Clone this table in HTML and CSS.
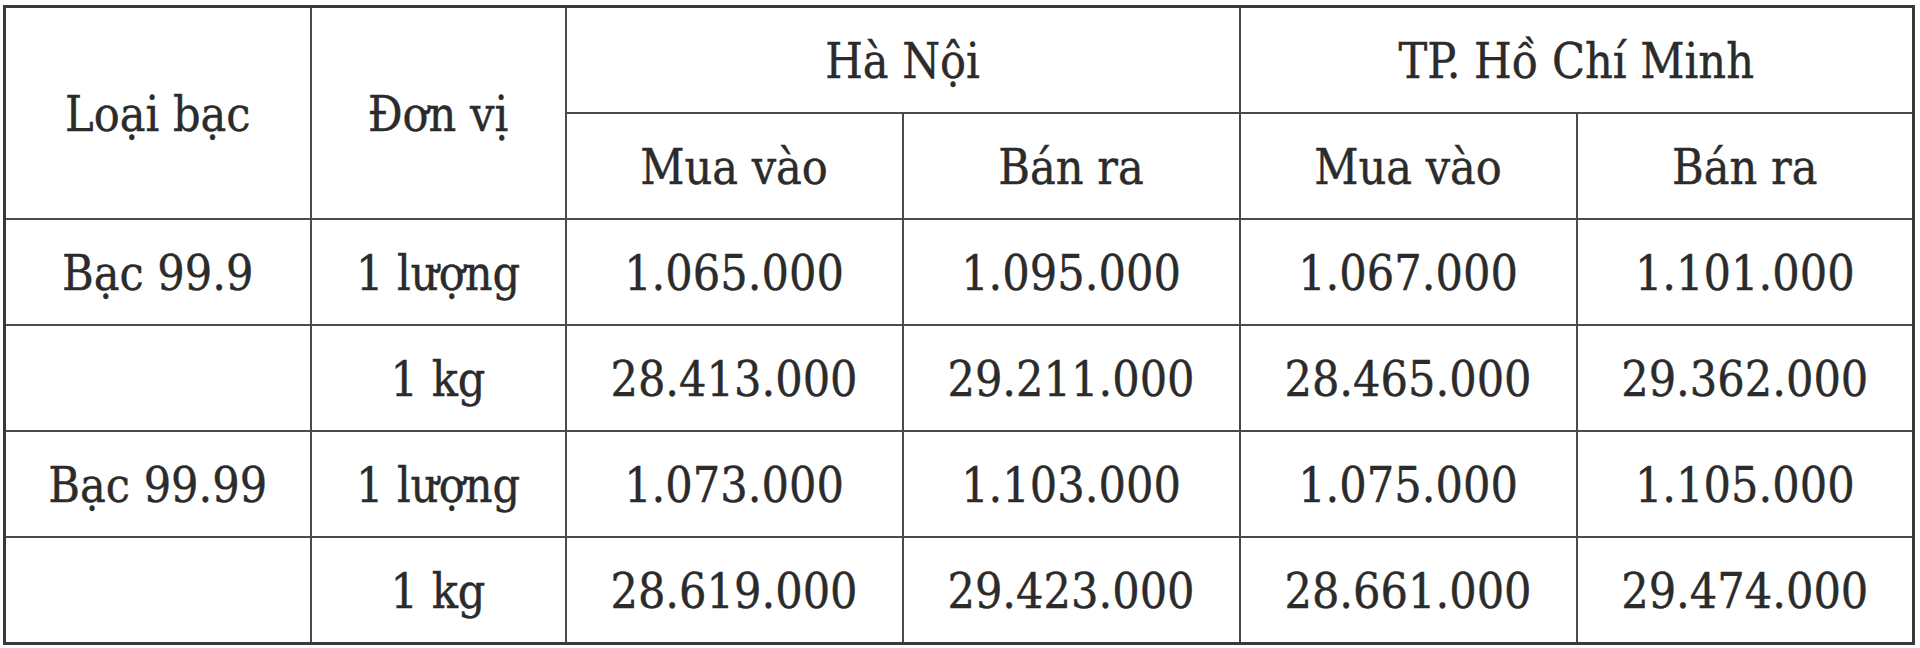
FILE: index.html
```html
<!DOCTYPE html>
<html lang="vi">
<head>
<meta charset="utf-8">
<title>Giá bạc</title>
<link rel="stylesheet" href="styles.css">
</head>
<body>
<table class="price-table">
  <colgroup>
    <col class="c-type">
    <col class="c-unit">
    <col class="c-val">
    <col class="c-val">
    <col class="c-val">
    <col class="c-val">
  </colgroup>
  <thead>
    <tr>
      <th rowspan="2">Loại bạc</th>
      <th rowspan="2">Đơn vị</th>
      <th colspan="2">Hà Nội</th>
      <th colspan="2">TP. Hồ Chí Minh</th>
    </tr>
    <tr>
      <th>Mua vào</th>
      <th>Bán ra</th>
      <th>Mua vào</th>
      <th>Bán ra</th>
    </tr>
  </thead>
  <tbody>
    <tr>
      <td>Bạc 99.9</td>
      <td>1 lượng</td>
      <td>1.065.000</td>
      <td>1.095.000</td>
      <td>1.067.000</td>
      <td>1.101.000</td>
    </tr>
    <tr>
      <td></td>
      <td>1 kg</td>
      <td>28.413.000</td>
      <td>29.211.000</td>
      <td>28.465.000</td>
      <td>29.362.000</td>
    </tr>
    <tr>
      <td>Bạc 99.99</td>
      <td>1 lượng</td>
      <td>1.073.000</td>
      <td>1.103.000</td>
      <td>1.075.000</td>
      <td>1.105.000</td>
    </tr>
    <tr>
      <td></td>
      <td>1 kg</td>
      <td>28.619.000</td>
      <td>29.423.000</td>
      <td>28.661.000</td>
      <td>29.474.000</td>
    </tr>
  </tbody>
</table>
</body>
</html>
```

FILE: styles.css
```css
html, body {
  margin: 0;
  padding: 0;
  background: #ffffff;
}

body {
  padding: 5px 0 0 3px;
}

.price-table {
  width: 1911px;
  table-layout: fixed;
  border-collapse: collapse;
  border: 3px solid #3a3a3a;
  font-family: "DejaVu Serif Condensed", "DejaVu Serif", serif;
  font-stretch: condensed;
  font-size: 48px;
  font-weight: normal;
  color: #2b2b2b;
  -webkit-text-stroke: 0.4px #2b2b2b;
}

.c-type { width: 306px; }
.c-unit { width: 255px; }
.c-val { width: 337px; }

.price-table th,
.price-table td {
  border: 2px solid #4a4a4a;
  height: 100px;
  padding: 4px 0 0;
  text-align: center;
  vertical-align: middle;
  font-weight: normal;
  line-height: 1.2;
}
```
